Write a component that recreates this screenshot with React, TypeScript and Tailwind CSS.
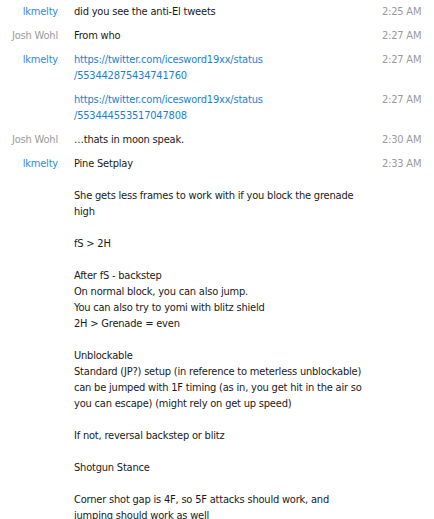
const FONT = { fontFamily: '"DejaVu Sans", Tahoma, sans-serif', fontStretch: "condensed" } as const;

interface Msg {
  name: string;
  self: boolean;
  time: string;
  lines: string[];
  link?: boolean;
}

const pine = `Pine Setplay

She gets less frames to work with if you block the grenade
high

fS > 2H

After fS - backstep
On normal block, you can also jump.
You can also try to yomi with blitz shield
2H > Grenade = even

Unblockable
Standard (JP?) setup (in reference to meterless unblockable)
can be jumped with 1F timing (as in, you get hit in the air so
you can escape) (might rely on get up speed)

If not, reversal backstep or blitz

Shotgun Stance

Corner shot gap is 4F, so 5F attacks should work, and
jumping should work as well`;

const messages: Msg[] = [
  { name: "lkmelty", self: true, time: "2:25 AM", lines: ["did you see the anti-El tweets"] },
  { name: "Josh Wohl", self: false, time: "2:27 AM", lines: ["From who"] },
  {
    name: "lkmelty",
    self: true,
    time: "2:27 AM",
    link: true,
    lines: ["https://twitter.com/icesword19xx/status", "/553442875434741760"],
  },
  {
    name: "",
    self: true,
    time: "2:27 AM",
    link: true,
    lines: ["https://twitter.com/icesword19xx/status", "/553444553517047808"],
  },
  { name: "Josh Wohl", self: false, time: "2:30 AM", lines: ["\u2026thats in moon speak."] },
  { name: "lkmelty", self: true, time: "2:33 AM", lines: pine.split("\n") },
];

function Row({ m }: { m: Msg }) {
  return (
    <div className="flex py-1 text-[11px] leading-4 tracking-[-0.2px]">
      <div className={`w-[58px] shrink-0 text-right whitespace-nowrap ${m.self ? "text-[#2f8ade]" : "text-[#9a9a9a]"}`}>
        {m.name}
      </div>
      <div className={`ml-4 flex-1 ${m.link ? "text-[#1b7fd6]" : "text-[#1a1a1a]"}`}>
        {m.lines.map((l, i) => (
          <div key={i} className="whitespace-pre h-4">
            {l === "" ? "\u00a0" : l}
          </div>
        ))}
      </div>
      <div className="w-[52px] shrink-0 text-right pr-[13px] text-[#9a9a9a] whitespace-nowrap">{m.time}</div>
    </div>
  );
}

export default function App() {
  return (
    <div className="w-[434px] h-[519px] overflow-hidden bg-white" style={FONT}>
      {messages.map((m, i) => (
        <Row key={i} m={m} />
      ))}
    </div>
  );
}
